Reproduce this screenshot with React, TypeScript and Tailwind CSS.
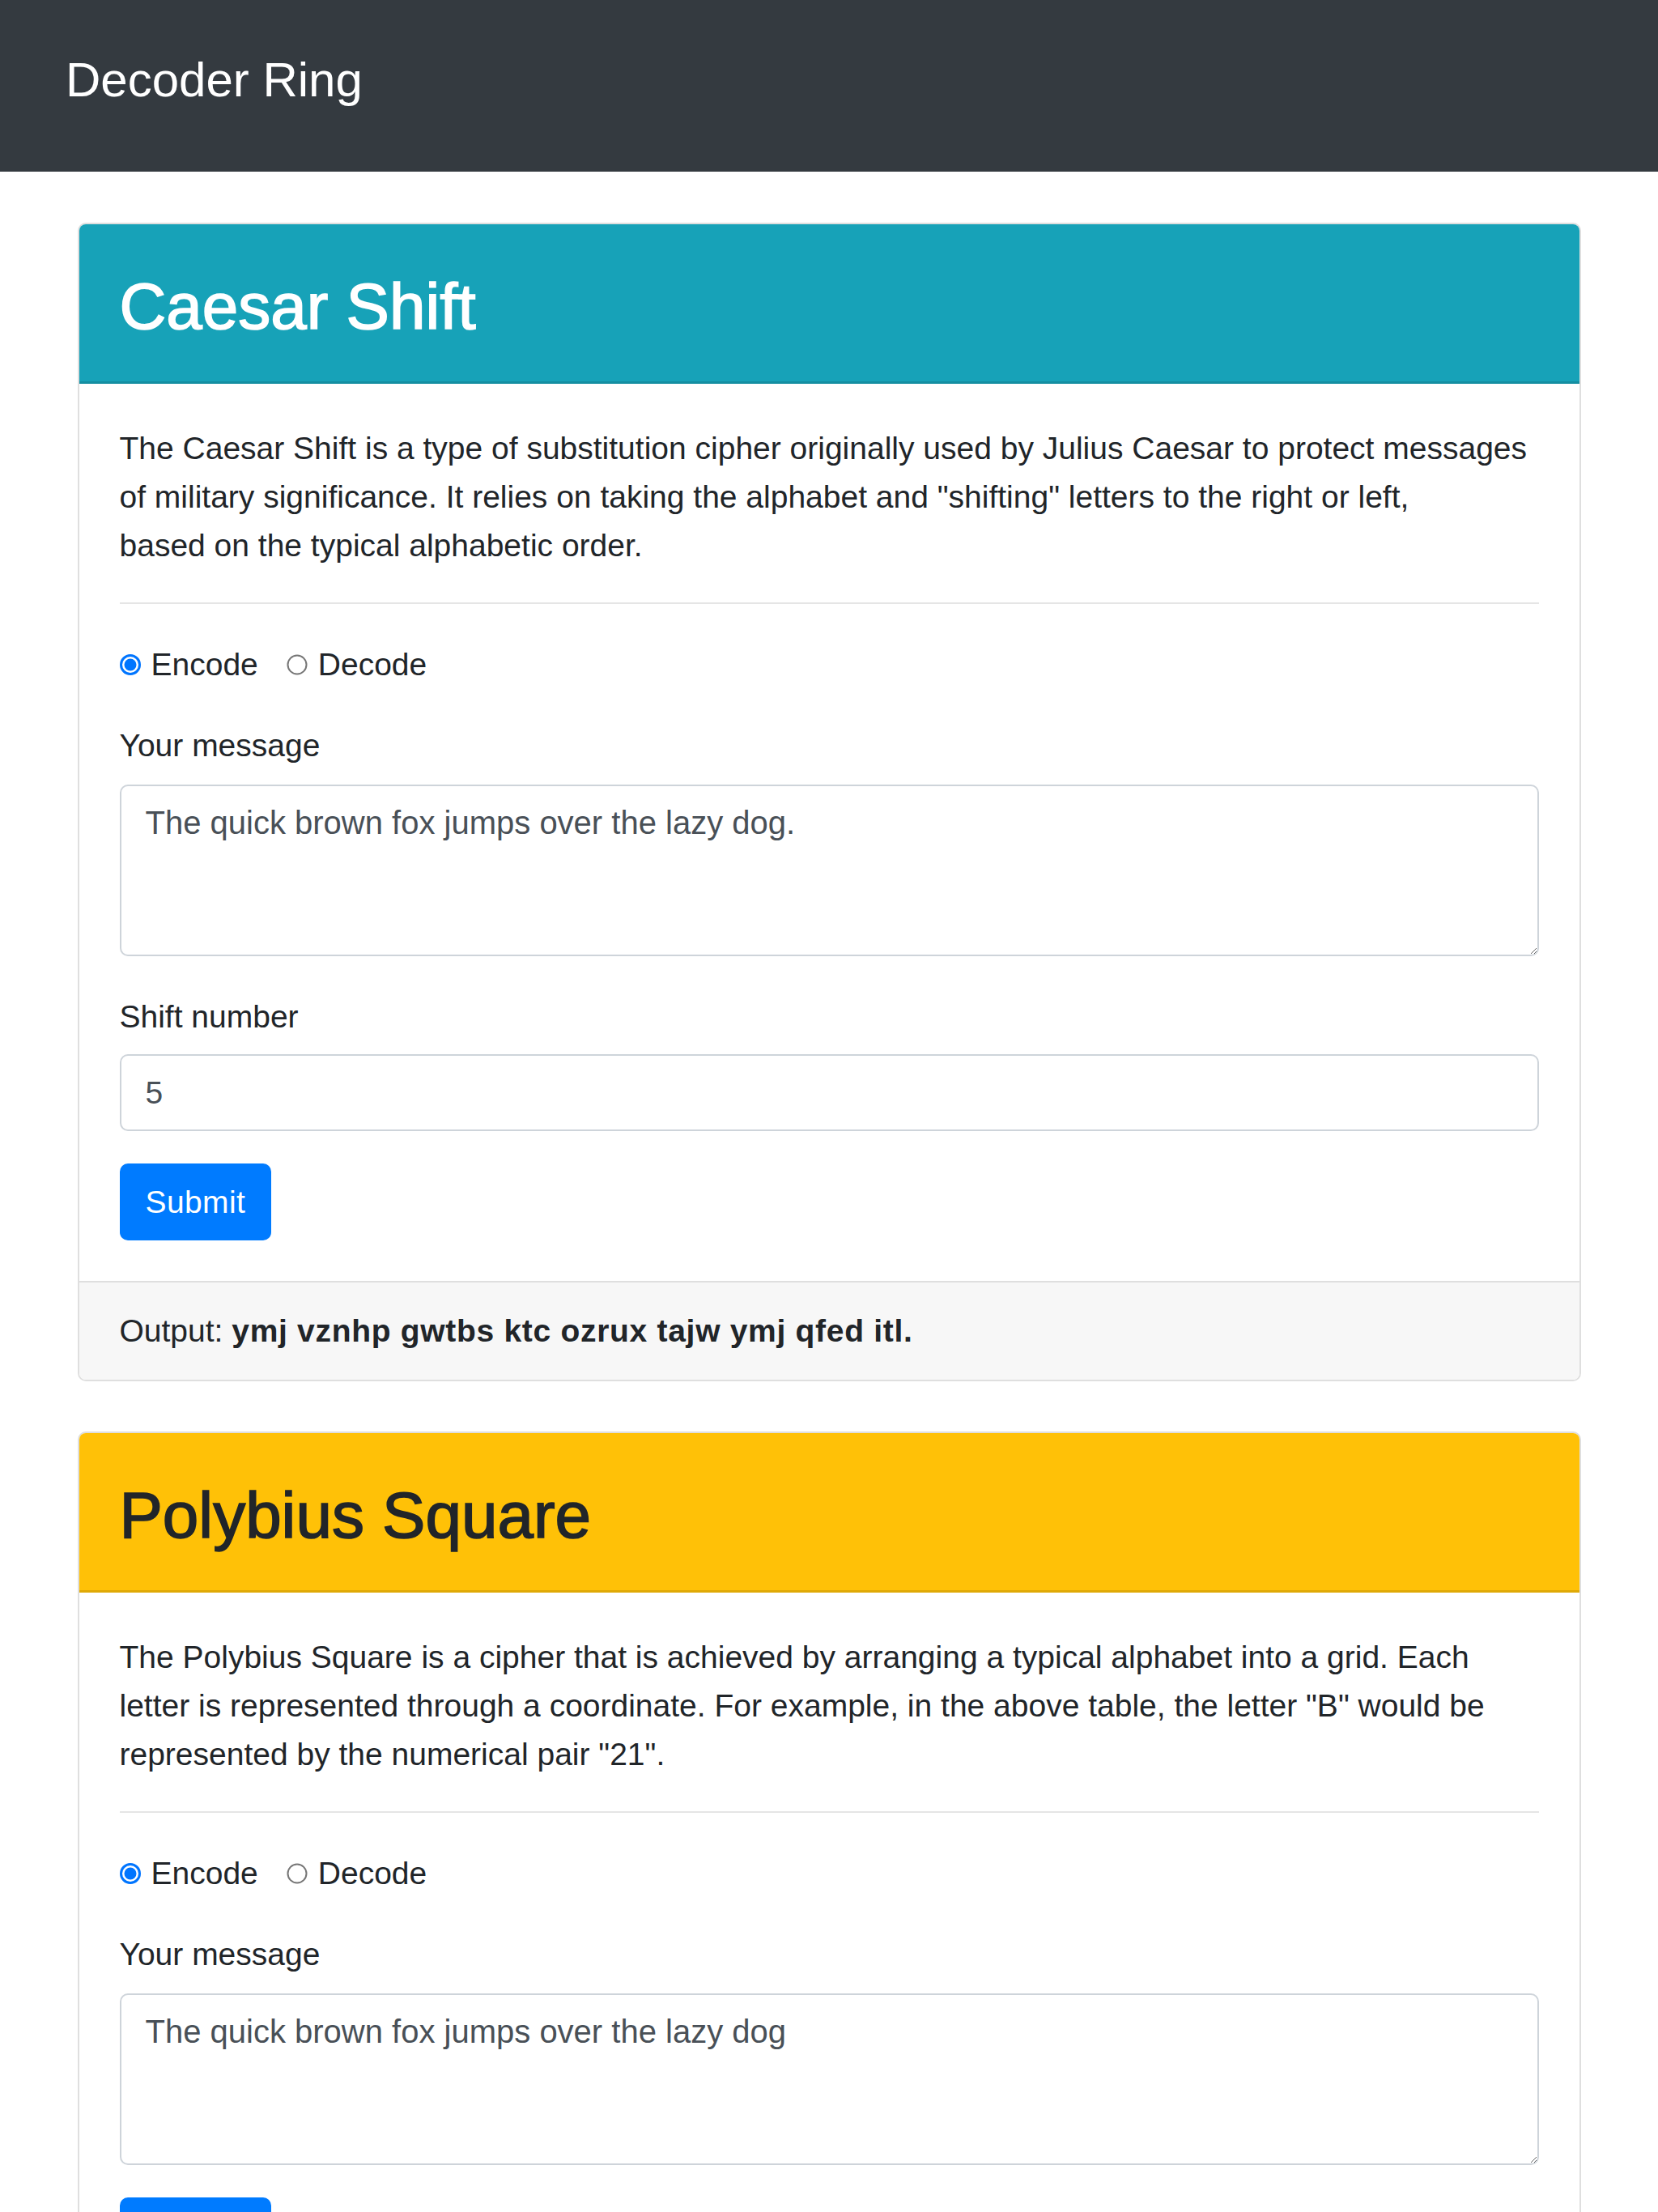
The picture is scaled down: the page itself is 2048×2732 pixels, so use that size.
import React, { useState } from 'react';

type Mode = 'encode' | 'decode';

const Radio: React.FC<{ checked: boolean; label: string; onClick: () => void }> = ({ checked, label, onClick }) => (
  <label className="flex items-center gap-[13px] cursor-pointer" onClick={onClick}>
    <svg width="26" height="26" viewBox="0 0 26 26" className="shrink-0">
      {checked ? (
        <>
          <circle cx="13" cy="13" r="11.5" fill="#fff" stroke="#0075ff" strokeWidth="3" />
          <circle cx="13" cy="13" r="7.5" fill="#0075ff" />
        </>
      ) : (
        <circle cx="13" cy="13" r="11.5" fill="#fff" stroke="#767676" strokeWidth="2" />
      )}
    </svg>
    <span>{label}</span>
  </label>
);

const CipherCard: React.FC<{
  title: string;
  headerClass: string;
  titleClass: string;
  description: string[];
  message: string;
  shift?: string;
  output?: string;
}> = ({ title, headerClass, titleClass, description, message, shift, output }) => {
  const [mode, setMode] = useState<Mode>('encode');

  return (
    <div className="border-2 border-[#dfdfdf] rounded-[10px] overflow-hidden bg-white">
      {/* Header */}
      <div className={`h-[197px] flex items-center px-[50px] pt-[10px] border-b-[3px] ${headerClass}`}>
        <h2 className={`text-[80px] leading-none font-normal [-webkit-text-stroke:1.6px_currentColor] ${titleClass}`}>
          {title}
        </h2>
      </div>

      {/* Body */}
      <div className="px-[50px] pt-[50px] pb-[50px]">
        <p className="mb-[40px]">
          {description.map((line, i) => (
            <React.Fragment key={i}>
              {line}
              {i < description.length - 1 && <br />}
            </React.Fragment>
          ))}
        </p>
        <hr className="border-0 border-t-2 border-[#e5e5e5] mb-[45px]" />

        <div className="flex items-center gap-[35px] h-[60px] mb-[40px]">
          <Radio checked={mode === 'encode'} label="Encode" onClick={() => setMode('encode')} />
          <Radio checked={mode === 'decode'} label="Decode" onClick={() => setMode('decode')} />
        </div>

        <label className="block mb-[18px]">Your message</label>
        <textarea
          defaultValue={message}
          className="block w-full h-[212px] border-2 border-[#ced4da] rounded-[10px] px-[30px] py-[15px] text-[40px] text-[#495057] leading-[60px] outline-none"
        />

        {shift !== undefined && (
          <>
            <label className="block mt-[45px] mb-[16px]">Shift number</label>
            <input
              type="text"
              defaultValue={shift}
              className="block w-full h-[95px] border-2 border-[#ced4da] rounded-[10px] px-[30px] text-[#495057] outline-none"
            />
          </>
        )}

        <button className="mt-[40px] h-[95px] px-[32px] rounded-[10px] bg-[#007bff] text-white tracking-[0.4px]">
          Submit
        </button>
      </div>

      {/* Footer */}
      {output !== undefined && (
        <div className="border-t-2 border-[#dfdfdf] bg-[#f7f7f7] px-[50px] py-[30px]">
          Output: <b className="font-bold tracking-[0.7px]">{output}</b>
        </div>
      )}
    </div>
  );
};

export default function App() {
  return (
    <div className="min-h-screen bg-white font-['Liberation_Sans',Arial,sans-serif] text-[39px] leading-[60px] text-[#212529]">
      <nav className="h-[212px] bg-[#343a40] flex items-center px-[81px] pb-[14px]">
        <span className="text-[60px] leading-none text-white">Decoder Ring</span>
      </nav>

      <main className="w-[1857px] mx-auto pt-[63px] pb-[60px] flex flex-col gap-[62px]">
        <CipherCard
          title="Caesar Shift"
          headerClass="bg-[#17a2b8] border-[#148ea1]"
          titleClass="text-white"
          description={[
            'The Caesar Shift is a type of substitution cipher originally used by Julius Caesar to protect messages',
            'of military significance. It relies on taking the alphabet and "shifting" letters to the right or left,',
            'based on the typical alphabetic order.',
          ]}
          message="The quick brown fox jumps over the lazy dog."
          shift="5"
          output="ymj vznhp gwtbs ktc ozrux tajw ymj qfed itl."
        />
        <CipherCard
          title="Polybius Square"
          headerClass="bg-[#ffc107] border-[#dfa907]"
          titleClass="text-[#212529]"
          description={[
            'The Polybius Square is a cipher that is achieved by arranging a typical alphabet into a grid. Each',
            'letter is represented through a coordinate. For example, in the above table, the letter "B" would be',
            'represented by the numerical pair "21".',
          ]}
          message="The quick brown fox jumps over the lazy dog"
        />
      </main>
    </div>
  );
}
